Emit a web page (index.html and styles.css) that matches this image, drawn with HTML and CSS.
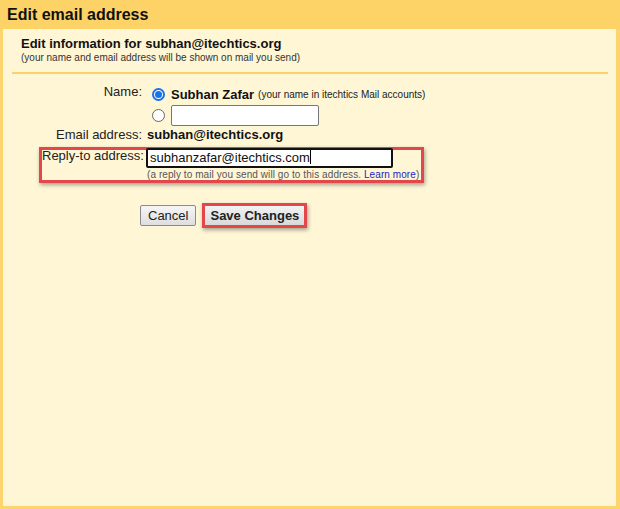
FILE: index.html
```html
<!DOCTYPE html>
<html>
<head>
<meta charset="utf-8">
<link rel="stylesheet" href="styles.css">
</head>
<body>
<div class="dialog">
  <div class="header">Edit email address</div>
  <div class="panel">
    <div class="intro">
      <div class="intro-title">Edit information for subhan@itechtics.org</div>
      <div class="intro-sub">(your name and email address will be shown on mail you send)</div>
    </div>
    <div class="divider"></div>
    <div class="form">
      <div class="row row-name">
        <div class="label">Name:</div>
        <div class="choices">
          <div class="choice">
            <span class="radio checked"></span>
            <span class="strong">Subhan Zafar</span>
            <span class="small">(your name in itechtics Mail accounts)</span>
          </div>
          <div class="choice">
            <span class="radio"></span>
            <span class="textbox short"></span>
          </div>
        </div>
      </div>
      <div class="row row-email">
        <div class="label">Email address:</div>
        <div class="strong value">subhan@itechtics.org</div>
      </div>
      <div class="annot">
        <div class="label label-reply">Reply-to address:</div>
        <div class="reply-col">
          <div class="textbox long">subhanzafar@itechtics.com<span class="caret"></span></div>
          <div class="hint">(a reply to mail you send will go to this address. <span class="link">Learn more</span>)</div>
        </div>
      </div>
      <div class="buttons">
        <span class="btn">Cancel</span>
        <span class="btn-annot"><span class="btn btn-save">Save Changes</span></span>
      </div>
    </div>
  </div>
</div>
</body>
</html>
```
FILE: styles.css
```css
html, body {
  margin: 0;
  padding: 0;
  background: #fdd46d;
}
body {
  font-family: "Liberation Sans", Arial, sans-serif;
  color: #000;
  width: 620px;
  height: 509px;
  overflow: hidden;
}
.dialog {
  display: flex;
  flex-direction: column;
  height: 509px;
}
.header {
  height: 29px;
  box-sizing: border-box;
  padding: 5px 0 0 7px;
  font-size: 16px;
  font-weight: bold;
  line-height: 20px;
  background: #fdd267;
  color: #111;
}
.panel {
  flex: 1;
  background: #fff6d6;
  margin: 0 4px 3px 3px;
}
.intro {
  padding: 7px 0 0 18px;
}
.intro-title {
  font-size: 13px;
  font-weight: bold;
  line-height: 16px;
  color: #111;
}
.intro-sub {
  font-size: 10px;
  line-height: 12px;
  color: #333;
}
.divider {
  height: 2px;
  background: #f6d36c;
  margin: 8px 8px 0 9px;
}
.form {
  padding-top: 10px;
}
.row {
  display: flex;
  font-size: 13px;
}
.label {
  width: 139px;
  text-align: right;
  font-size: 13px;
  line-height: 16px;
  color: #222;
  flex: none;
  white-space: nowrap;
}
.choices {
  display: flex;
  flex-direction: column;
  gap: 1px;
  margin-left: 10px;
}
.choice {
  display: flex;
  align-items: center;
  height: 20px;
}
.radio {
  width: 11px;
  height: 11px;
  border: 1px solid #666;
  border-radius: 50%;
  background: #fff;
  margin-right: 6px;
  flex: none;
  box-sizing: content-box;
  position: relative;
}
.radio.checked {
  width: 9px;
  height: 9px;
  border: 2px solid #1a73e8;
}
.radio.checked::after {
  content: "";
  position: absolute;
  left: 1px;
  top: 1px;
  width: 7px;
  height: 7px;
  border-radius: 50%;
  background: #1a73e8;
}
.strong {
  font-weight: bold;
  font-size: 13px;
  color: #111;
}
.small {
  font-size: 10px;
  color: #222;
  margin-left: 4px;
}
.textbox {
  display: block;
  background: #fff;
  box-sizing: border-box;
}
.textbox.short {
  width: 148px;
  height: 21px;
  border: 1px solid #767676;
  border-radius: 2px;
}
.row-email {
  margin-top: 2px;
}
.row-email .value {
  margin-left: 5px;
  line-height: 16px;
}
.annot {
  display: flex;
  width: 385px;
  height: 36px;
  box-sizing: border-box;
  margin: 4px 0 0 36px;
  border: 3px solid #e2474c;
  box-shadow: 1px 2px 4px rgba(0,0,0,0.35);
}
.label-reply {
  width: 100px;
  text-align: left;
  line-height: 14px;
  margin-top: -1px;
}
.reply-col {
  margin-left: 4px;
  margin-top: -2px;
}
.textbox.long {
  width: 247px;
  height: 20px;
  border: 2px solid #111;
  border-radius: 2px;
  font-size: 13px;
  line-height: 16px;
  padding-left: 2px;
  color: #111;
}
.caret {
  display: inline-block;
  width: 1px;
  height: 14px;
  background: #000;
  vertical-align: -2px;
}
.hint {
  font-size: 10px;
  line-height: 12px;
  color: #555;
  margin-top: 1px;
  padding-left: 1px;
  letter-spacing: 0.08px;
  white-space: nowrap;
}
.link {
  color: #2323c8;
}
.buttons {
  display: flex;
  align-items: center;
  margin: 20px 0 0 137px;
  gap: 6px;
}
.btn {
  display: inline-block;
  font-size: 13px;
  line-height: 19px;
  height: 21px;
  box-sizing: border-box;
  padding: 0 7px;
  border: 1px solid #8a8a8a;
  border-radius: 2px;
  background: linear-gradient(#f6f6f6, #dedede);
  color: #222;
}
.btn-annot {
  display: inline-block;
  border: 3px solid #e2474c;
  box-shadow: 1px 2px 4px rgba(0,0,0,0.35);
}
.btn-save {
  font-weight: bold;
  border: none;
  border-radius: 0;
  padding: 0 5px;
  height: 19px;
  line-height: 19px;
  background: linear-gradient(#f3f3f3, #d9d9d9);
}
```
